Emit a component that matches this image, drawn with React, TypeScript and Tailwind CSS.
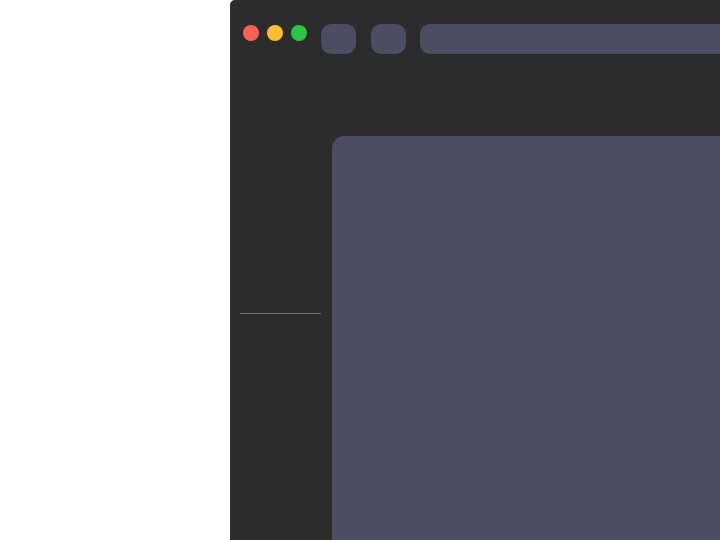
import React from "react";

export default function App() {
  return (
    <div className="flex h-[540px] w-[720px] overflow-hidden bg-white">
      <div className="w-[230px] shrink-0" />
      <div className="flex h-[540px] w-[600px] shrink-0 flex-col rounded-tl-[5px] bg-[#2c2c2c]">
        <div className="flex items-start pl-[13px] pt-[24px]">
          <div className="mt-[1px] flex gap-[8px]">
            <span className="h-[16px] w-[16px] rounded-full bg-[#ff5f57]" />
            <span className="h-[16px] w-[16px] rounded-full bg-[#febc2e]" />
            <span className="h-[16px] w-[16px] rounded-full bg-[#28c840]" />
          </div>
          <div className="ml-[14px] h-[30px] w-[35px] rounded-[10px] bg-[#4b4e61]" />
          <div className="ml-[15px] h-[30px] w-[35px] rounded-[10px] bg-[#4b4e61]" />
          <div className="ml-[14px] h-[30px] flex-1 rounded-[10px] bg-[#4b4e61]" />
        </div>
        <div className="mt-[82px] flex flex-1 pl-[10px]">
          <div className="w-[81px] shrink-0">
            <div className="mt-[177px] h-px bg-[#6b6b6b]" />
          </div>
          <div className="ml-[11px] flex-1 rounded-tl-[12px] bg-[#4b4e61]" />
        </div>
      </div>
    </div>
  );
}
